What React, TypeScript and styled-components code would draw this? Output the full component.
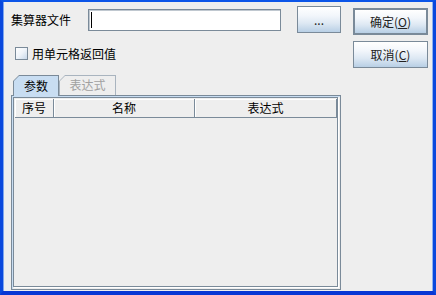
import styled, { createGlobalStyle } from "styled-components"

const Global = createGlobalStyle`
html, body { margin: 0; padding: 0; background: #eeeeee; }
* { box-sizing: border-box; }
`

const App = () => {
    return (
        <>
            <Global />
            <Window>
                <LeftCol>
                    <FileRow>
                        <Label>集算器文件</Label>
                        <TextField><Caret /></TextField>
                        <Button w={44} h={27}>...</Button>
                    </FileRow>
                    <CheckRow>
                        <CheckBox />
                        <CheckText>用单元格返回值</CheckText>
                    </CheckRow>
                    <TabStrip>
                        <TabOuter active>
                            <TabInner active>参数</TabInner>
                        </TabOuter>
                        <TabOuter>
                            <TabInner>表达式</TabInner>
                        </TabOuter>
                    </TabStrip>
                    <TabPanel>
                        <ScrollPane>
                            <HeaderRow>
                                <HeaderCell w={39}>序号</HeaderCell>
                                <HeaderCell w={141}>名称</HeaderCell>
                                <HeaderCell w={141} last>表达式</HeaderCell>
                            </HeaderRow>
                        </ScrollPane>
                    </TabPanel>
                </LeftCol>
                <RightCol>
                    <Button w={75} h={27} primary>确定(<u>O</u>)</Button>
                    <Button w={75} h={27}>取消(<u>C</u>)</Button>
                </RightCol>
            </Window>
        </>
    )
}

export default App

const Window = styled.div`
width: 436px;
height: 295px;
background: #eeeeee;
border-top: 2px solid #0c55e8;
border-left: 3px solid #0a48dd;
border-right: 3px solid #0a48dd;
border-bottom: 4px solid #0836d4;
box-shadow: inset -1px 0 0 #8fb2f0, inset 1px 0 0 #7ea6ee;
display: flex;
font-family: "Noto Sans CJK SC", "Noto Sans", sans-serif;
font-size: 12px;
color: #000;
`
const LeftCol = styled.div`
width: 338px;
padding-left: 8px;
display: flex;
flex-direction: column;
`
const FileRow = styled.div`
margin-top: 4px;
height: 27px;
display: flex;
align-items: center;
`
const Label = styled.div`
width: 77px;
line-height: 14px;
`
const TextField = styled.div`
width: 193px;
height: 22px;
background: #ffffff;
border: 1px solid #7a8a99;
box-shadow: inset 1px 1px 0 #c0c8d0;
margin-right: 16px;
padding: 2px 0 0 2px;
`
const Caret = styled.div`
width: 1px;
height: 16px;
background: #000;
`
const Button = styled.div<{ w: number; h: number; primary?: boolean }>`
width: ${p => p.w}px;
height: ${p => p.h}px;
border: ${p => (p.primary ? "2px" : "1px")} solid #7a8a99;
background: linear-gradient(to bottom, #ffffff 0%, #f2f6fb 35%, #dde8f3 65%, #b8cfe5 100%);
display: flex;
justify-content: center;
align-items: center;
font-size: 12px;
color: #222;
line-height: 14px;
u { text-decoration: underline; text-underline-offset: 1px; }
`
const CheckRow = styled.div`
margin-top: 14px;
height: 13px;
display: flex;
align-items: center;
padding-left: 4px;
`
const CheckBox = styled.div`
width: 13px;
height: 13px;
border: 1px solid #7a8a99;
background: linear-gradient(135deg, #ffffff 0%, #eef3f9 50%, #c8d8ea 100%);
margin-right: 4px;
`
const CheckText = styled.div`
line-height: 14px;
`
const TabStrip = styled.div`
margin-top: 14px;
padding-left: 2px;
height: 21px;
display: flex;
align-items: flex-end;
`
const TabOuter = styled.div<{ active?: boolean }>`
height: ${p => (p.active ? "21px" : "20px")};
width: ${p => (p.active ? "46px" : "57px")};
margin-bottom: ${p => (p.active ? "-1px" : "0")};
padding: 1px 1px 0 1px;
background: ${p => (p.active ? "#7a8a99" : "#a9b4bf")};
clip-path: polygon(6px 0, 100% 0, 100% 100%, 0 100%, 0 6px);
position: relative;
z-index: ${p => (p.active ? 2 : 1)};
`
const TabInner = styled.div<{ active?: boolean }>`
height: 100%;
background: ${p => (p.active ? "#c8ddf2" : "#eeeeee")};
clip-path: polygon(5px 0, 100% 0, 100% 100%, 0 100%, 0 5px);
color: ${p => (p.active ? "#000" : "#a0a0a0")};
display: flex;
justify-content: center;
align-items: center;
padding-bottom: 1px;
line-height: 14px;
`
const TabPanel = styled.div`
width: 330px;
height: 195px;
border: 1px solid #7a8a99;
background: #eeeeee;
padding: 1px 2px 2px 1px;
box-shadow: inset 1px 1px 0 #c8ddf2;
display: flex;
`
const ScrollPane = styled.div`
flex: 1;
border: 1px solid #7a8a99;
box-shadow: 1px 1px 0 #ffffff;
background: #eeeeee;
padding: 1px 0 0 1px;
display: flex;
flex-direction: column;
`
const HeaderRow = styled.div`
height: 19px;
display: flex;
border-bottom: 1px solid #7a8a99;
`
const HeaderCell = styled.div<{ w: number; last?: boolean }>`
width: ${p => p.w}px;
flex: ${p => (p.last ? "1" : "none")};
border-right: 1px solid #7a8a99;
box-shadow: inset 1px 1px 0 #ffffff;
display: flex;
justify-content: center;
align-items: center;
line-height: 14px;
`
const RightCol = styled.div`
margin-left: 12px;
padding-top: 6px;
display: flex;
flex-direction: column;
gap: 6px;
`
